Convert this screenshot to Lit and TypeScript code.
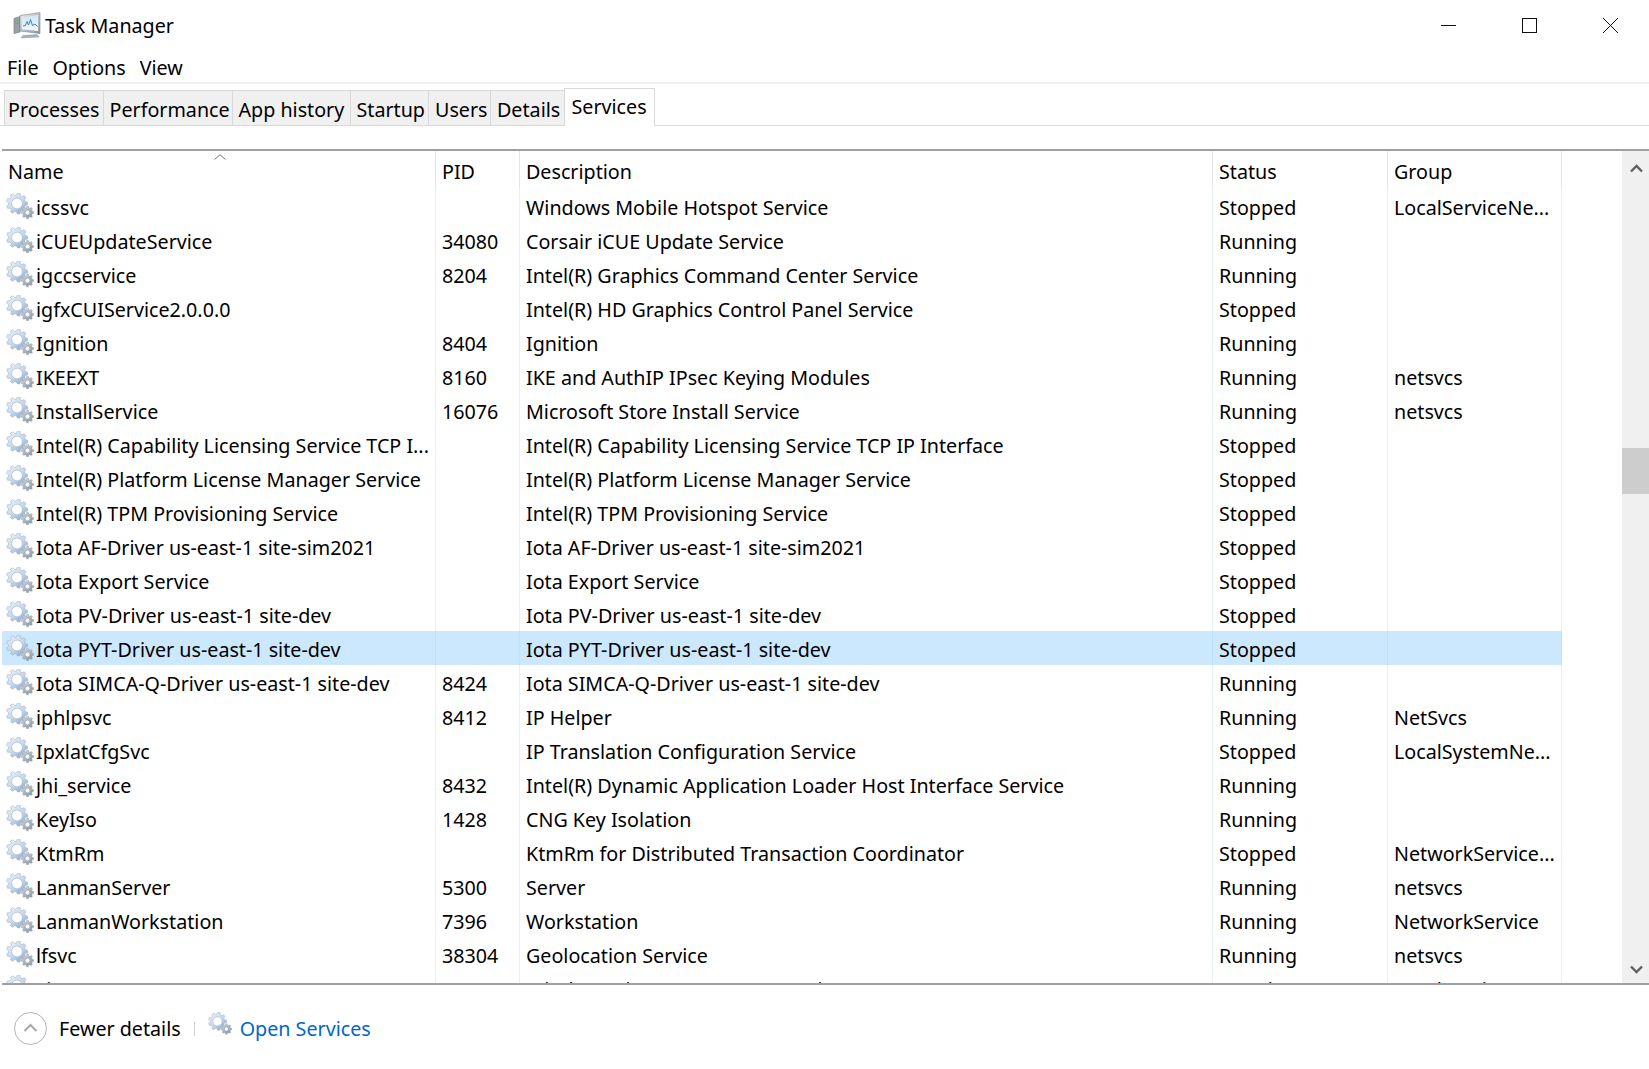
import { LitElement, html, svg, css } from 'lit';
import { customElement } from 'lit/decorators.js';

type Row = [string, string, string, string, string];

const rows: Row[] = [
  ['icssvc', '', 'Windows Mobile Hotspot Service', 'Stopped', 'LocalServiceNe...'],
  ['iCUEUpdateService', '34080', 'Corsair iCUE Update Service', 'Running', ''],
  ['igccservice', '8204', 'Intel(R) Graphics Command Center Service', 'Running', ''],
  ['igfxCUIService2.0.0.0', '', 'Intel(R) HD Graphics Control Panel Service', 'Stopped', ''],
  ['Ignition', '8404', 'Ignition', 'Running', ''],
  ['IKEEXT', '8160', 'IKE and AuthIP IPsec Keying Modules', 'Running', 'netsvcs'],
  ['InstallService', '16076', 'Microsoft Store Install Service', 'Running', 'netsvcs'],
  ['Intel(R) Capability Licensing Service TCP I...', '', 'Intel(R) Capability Licensing Service TCP IP Interface', 'Stopped', ''],
  ['Intel(R) Platform License Manager Service', '', 'Intel(R) Platform License Manager Service', 'Stopped', ''],
  ['Intel(R) TPM Provisioning Service', '', 'Intel(R) TPM Provisioning Service', 'Stopped', ''],
  ['Iota AF-Driver us-east-1 site-sim2021', '', 'Iota AF-Driver us-east-1 site-sim2021', 'Stopped', ''],
  ['Iota Export Service', '', 'Iota Export Service', 'Stopped', ''],
  ['Iota PV-Driver us-east-1 site-dev', '', 'Iota PV-Driver us-east-1 site-dev', 'Stopped', ''],
  ['Iota PYT-Driver us-east-1 site-dev', '', 'Iota PYT-Driver us-east-1 site-dev', 'Stopped', ''],
  ['Iota SIMCA-Q-Driver us-east-1 site-dev', '8424', 'Iota SIMCA-Q-Driver us-east-1 site-dev', 'Running', ''],
  ['iphlpsvc', '8412', 'IP Helper', 'Running', 'NetSvcs'],
  ['IpxlatCfgSvc', '', 'IP Translation Configuration Service', 'Stopped', 'LocalSystemNe...'],
  ['jhi_service', '8432', 'Intel(R) Dynamic Application Loader Host Interface Service', 'Running', ''],
  ['KeyIso', '1428', 'CNG Key Isolation', 'Running', ''],
  ['KtmRm', '', 'KtmRm for Distributed Transaction Coordinator', 'Stopped', 'NetworkService...'],
  ['LanmanServer', '5300', 'Server', 'Running', 'netsvcs'],
  ['LanmanWorkstation', '7396', 'Workstation', 'Running', 'NetworkService'],
  ['lfsvc', '38304', 'Geolocation Service', 'Running', 'netsvcs'],
  ['LicenseManager', '10832', 'Windows License Manager Service', 'Running', 'LocalService'],
];

const SELECTED = 13;

// toothed outline around a centre, used for both gears of the service icon
function gearPath(cx: number, cy: number, outer: number, inner: number, teeth: number) {
  const pts: string[] = [];
  const step = (Math.PI * 2) / teeth;
  for (let i = 0; i < teeth; i++) {
    const a = i * step;
    const corners: [number, number][] = [
      [a - step * 0.34, inner],
      [a - step * 0.18, outer],
      [a + step * 0.18, outer],
      [a + step * 0.34, inner],
    ];
    for (const [ang, r] of corners) {
      pts.push(`${(cx + Math.cos(ang) * r).toFixed(2)} ${(cy + Math.sin(ang) * r).toFixed(2)}`);
    }
  }
  return `M${pts.join('L')}Z`;
}

const gearDefs = svg`
  <defs>
    <linearGradient id="big" x1="0.1" y1="0" x2="0.9" y2="1">
      <stop offset="0" stop-color="#eef3f9" />
      <stop offset="0.55" stop-color="#c4d6ea" />
      <stop offset="1" stop-color="#7f9fc6" />
    </linearGradient>
    <linearGradient id="small" x1="0.1" y1="0" x2="0.9" y2="1">
      <stop offset="0" stop-color="#d3d9e0" />
      <stop offset="1" stop-color="#84939f" />
    </linearGradient>
    <symbol id="gear" viewBox="0 0 28 26">
      <path d=${gearPath(11, 10.5, 10.6, 8.4, 9)} fill="url(#big)" stroke="#92a8c2" stroke-width=".5" />
      <circle cx="11" cy="10.5" r="5.4" fill="#fff" stroke="#a4b8cf" stroke-width=".7" />
      <path d=${gearPath(21.5, 19.5, 6.2, 4.8, 8)} fill="url(#small)" stroke="#8b98a4" stroke-width=".4" />
      <circle cx="21.5" cy="19.5" r="2.5" fill="#f7f9fb" stroke="#86939e" stroke-width=".6" />
    </symbol>
  </defs>
`;

const taskIcon = html`
  <svg class="app-icon" viewBox="0 0 28 27" width="28" height="27">
    <defs>
      <linearGradient id="shell" x1="0" y1="0" x2="1" y2="1">
        <stop offset="0" stop-color="#eef1f4" />
        <stop offset="1" stop-color="#8b939c" />
      </linearGradient>
      <linearGradient id="screen" x1="0" y1="0" x2="0" y2="1">
        <stop offset="0" stop-color="#cfe6f7" />
        <stop offset="1" stop-color="#f2f9fe" />
      </linearGradient>
    </defs>
    <path d="M1 6.5 7 4.5V20L1 21.5Z" fill="#9aa2a8" stroke="#6b7278" stroke-width=".6" />
    <path d="M2.2 9.5 5.8 8.5M2.2 12 5.8 11" stroke="#5fae5a" stroke-width="1" />
    <path d="M7 3.5 27 0.5V21.5L7 19Z" fill="url(#shell)" stroke="#7c848c" stroke-width=".6" />
    <path d="M9 5.5 25.2 3V19L9 17.2Z" fill="url(#screen)" />
    <path d="M10 14 12.5 13.5 14 9.5 15.5 13 17.5 7.5 19.5 13.5 22 12 24.5 14.5" fill="none" stroke="#3e7fc4" stroke-width="1" />
    <path d="M10 23.5 24 22.5 26 25 8 26Z" fill="#aab1b8" stroke="#80878e" stroke-width=".4" />
  </svg>
`;

const gear = (cls: string) => html`<svg class=${cls}><use href="#gear"></use></svg>`;

@customElement('app-root')
export class AppRoot extends LitElement {
  static styles = css`
    :host {
      display: block;
      width: 1649px;
      height: 1069px;
      overflow: hidden;
      background: #fff;
      color: #000;
      font-family: 'Noto Sans', sans-serif;
      font-size: 19.7px;
    }

    .defs {
      position: absolute;
      width: 0;
      height: 0;
    }

    .title {
      display: flex;
      align-items: center;
      height: 48px;
      padding: 2px 0 0 13px;
      box-sizing: border-box;
    }

    .title .name {
      margin-left: 4px;
      flex: 1;
    }

    .app-icon {
      flex: none;
    }

    .winbtn {
      width: 15px;
      height: 15px;
      margin-right: 66px;
      flex: none;
    }

    .winbtn:last-child {
      margin-right: 31px;
    }

    .menu {
      display: flex;
      gap: 14px;
      height: 34px;
      padding: 4px 0 0 7px;
      box-sizing: border-box;
      align-items: center;
    }

    .rule {
      height: 2px;
      background: #f0f0f0;
    }

    .tabs {
      display: grid;
      grid-template-columns: 99.5px 129px 118px 78.5px 62px 73.5px 90px;
      height: 42px;
      padding: 4px 0 0 4px;
      box-sizing: border-box;
      align-items: end;
      border-bottom: 1px solid #d9d9d9;
    }

    .tab {
      height: 35px;
      box-sizing: border-box;
      background: #f0f0f0;
      border: 1px solid #d9d9d9;
      border-width: 1px 1px 0 0;
      padding: 2px 0 0 6px;
      display: flex;
      align-items: center;
      white-space: nowrap;
    }

    .tab:first-child {
      border-left: 1px solid #d9d9d9;
      padding-left: 3px;
    }

    .tab.active {
      height: 38px;
      margin-bottom: -1px;
      background: #fff;
      border-left: 1px solid #d9d9d9;
      padding: 0 0 2px 7px;
      margin-left: -1px;
    }

    .table {
      margin: 23px 0 0 2px;
      height: 836px;
      box-sizing: border-box;
      border-top: 2px solid #a0a0a0;
      border-bottom: 2px solid #a0a0a0;
      display: flex;
    }

    .list {
      width: 1620px;
      flex: none;
      overflow: hidden;
    }

    .row {
      display: grid;
      grid-template-columns: 434px 84px 693px 175px 174px 60px;
      height: 34px;
    }

    .head {
      height: 38px;
      position: relative;
    }

    .cell {
      box-sizing: border-box;
      border-right: 1px solid #e6effb;
      padding: 2px 0 0 6px;
      display: flex;
      align-items: center;
      white-space: nowrap;
      overflow: hidden;
    }

    .head .cell {
      border-right-color: #e5e5e5;
      padding-top: 2px;
    }

    .cell:last-child {
      border-right: 0;
    }

    .row.selected .cell:not(:last-child) {
      background: #cce8ff;
      border-right-color: #bfdffb;
    }

    .row-gear {
      width: 28px;
      height: 26px;
      margin: -2px 2px 0 -2px;
      flex: none;
    }

    .caret {
      position: absolute;
      left: 212px;
      top: 3px;
    }

    .scroll {
      flex: 1;
      background: #f0f0f0;
      display: flex;
      flex-direction: column;
      align-items: center;
      justify-content: space-between;
      position: relative;
      padding: 13px 0 9px 2px;
      box-sizing: border-box;
    }

    .thumb {
      position: absolute;
      left: 0;
      right: 0;
      top: 297px;
      height: 46px;
      background: #cdcdcd;
    }

    .footer {
      display: flex;
      align-items: center;
      height: 84px;
      padding: 3px 0 0 14px;
      box-sizing: border-box;
    }

    .less {
      width: 33px;
      height: 33px;
      flex: none;
    }

    .fewer {
      margin-left: 12px;
    }

    .sep {
      width: 1px;
      height: 14px;
      background: #d0d0d0;
      margin: 0 14px 0 13px;
    }

    .foot-gear {
      width: 24px;
      height: 23px;
      margin: -10px 8px 0 -1px;
    }

    .link {
      color: #0066cc;
    }
  `;

  render() {
    return html`
      <svg class="defs">${gearDefs}</svg>
      <div class="title">
        ${taskIcon}
        <span class="name">Task Manager</span>
        <svg class="winbtn" viewBox="0 0 15 15"><path d="M0 7.5H15" stroke="#111" stroke-width="1" /></svg>
        <svg class="winbtn" viewBox="0 0 15 15"><rect x=".5" y=".5" width="14" height="14" fill="none" stroke="#111" /></svg>
        <svg class="winbtn" viewBox="0 0 15 15"><path d="M0 0 15 15M15 0 0 15" stroke="#111" stroke-width="1" /></svg>
      </div>
      <div class="menu"><span>File</span><span>Options</span><span>View</span></div>
      <div class="rule"></div>
      <div class="tabs">
        ${['Processes', 'Performance', 'App history', 'Startup', 'Users', 'Details'].map(
          (t) => html`<div class="tab">${t}</div>`
        )}
        <div class="tab active">Services</div>
      </div>
      <div class="table">
        <div class="list">
          <div class="row head">
            <div class="cell">Name</div>
            <div class="cell">PID</div>
            <div class="cell">Description</div>
            <div class="cell">Status</div>
            <div class="cell">Group</div>
            <svg class="caret" width="12" height="6" viewBox="0 0 12 6"><path d="M.5 5.5 6 .8 11.5 5.5" fill="none" stroke="#777" /></svg>
          </div>
          ${rows.map(
            (r, i) => html`
              <div class="row ${i === SELECTED ? 'selected' : ''}">
                <div class="cell">${gear('row-gear')}${r[0]}</div>
                <div class="cell">${r[1]}</div>
                <div class="cell">${r[2]}</div>
                <div class="cell">${r[3]}</div>
                <div class="cell">${r[4]}</div>
                <div class="cell"></div>
              </div>
            `
          )}
        </div>
        <div class="scroll">
          <svg width="13" height="9" viewBox="0 0 13 9"><path d="M1 7.5 6.5 2 12 7.5" fill="none" stroke="#606060" stroke-width="2.4" /></svg>
          <div class="thumb"></div>
          <svg width="13" height="9" viewBox="0 0 13 9"><path d="M1 1.5 6.5 7 12 1.5" fill="none" stroke="#606060" stroke-width="2.4" /></svg>
        </div>
      </div>
      <div class="footer">
        <svg class="less" viewBox="0 0 33 33">
          <circle cx="16.5" cy="16.5" r="16" fill="#fff" stroke="#b4b4b4" />
          <path d="M10.5 19 16.5 13 22.5 19" fill="none" stroke="#a8a8a8" stroke-width="2" />
        </svg>
        <span class="fewer">Fewer details</span>
        <div class="sep"></div>
        ${gear('foot-gear')}
        <span class="link">Open Services</span>
      </div>
    `;
  }
}
